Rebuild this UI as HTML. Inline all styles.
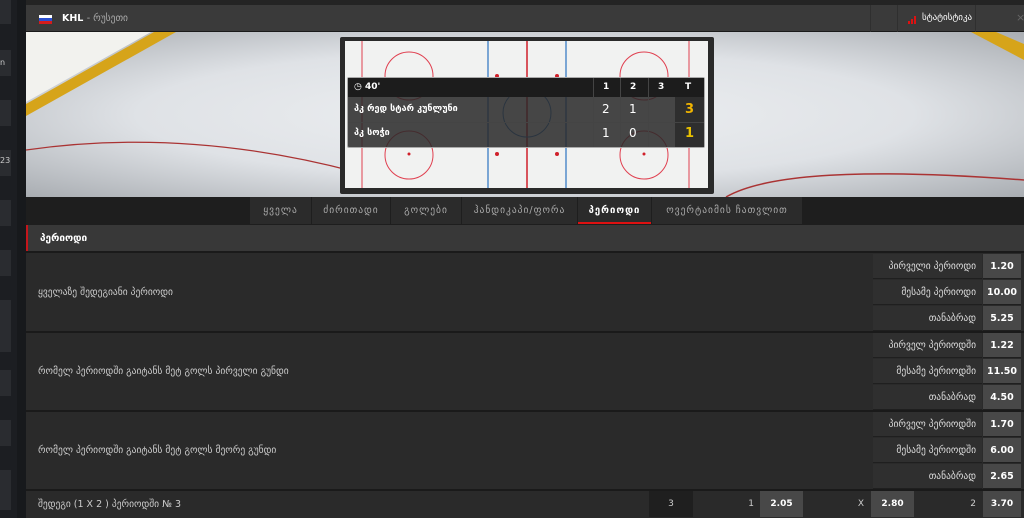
<!DOCTYPE html>
<html><head><meta charset="utf-8">
<style>
*{margin:0;padding:0;box-sizing:border-box}
body{width:1024px;height:518px;overflow:hidden;background:#17191c;font-family:"DejaVu Sans","Liberation Sans",sans-serif;font-size:9px;color:#ccc;position:relative}
.abs{position:absolute}
.side{left:0;top:0;width:17px;height:518px;background:#1c1e22}
.tile{position:absolute;left:0;width:11px;background:#2a2c30}
.main{left:26px;top:0;width:998px;height:518px;background:#242424}
.hdr{left:26px;top:5px;width:998px;height:27px;background:#3a3a3a;border-bottom:1px solid #1a1a1a}
.video{left:26px;top:32px;width:998px;height:165px;background:radial-gradient(ellipse at 50% 50%,#eef0f2 0%,#dfe2e6 55%,#a9adb2 100%)}
.tabs{left:26px;top:197px;width:998px;height:28px;background:#1e1e1e}
.tab{position:absolute;top:0;height:27px;background:#2b2b2b;color:#aaa;font-size:9.5px;letter-spacing:1px;line-height:27px;text-align:center}
.sec{left:26px;top:225px;width:998px;height:27px;background:#383838;border-left:2px solid #c4161c;color:#fff;font-weight:bold;font-size:10px;line-height:27px;padding-left:12px}
.row{position:absolute;left:26px;width:998px;background:#2a2a2a;border-top:2px solid #1a1a1a}
.rl{position:absolute;left:12px;color:#ccc;font-size:9.5px}
.lab{position:absolute;left:847px;width:109px;height:25px;background:#2f2f2f;color:#ddd;text-align:right;padding-right:6px;line-height:25px;font-size:9.5px;border-bottom:1px solid #1f1f1f}
.odd{position:absolute;left:957px;width:38px;height:25px;background:#484848;color:#fff;font-weight:bold;text-align:center;line-height:25px;font-size:9.5px;border-bottom:1px solid #1f1f1f}
.sb{left:347px;top:77px;width:358px;height:71px;border:1px solid #aaa;border-radius:2px;background:rgba(40,40,40,.85);color:#fff;font-size:9px}
.sb div{position:absolute}
</style></head><body>
<div class="abs side">
<div class="tile" style="top:0;height:24px"></div>
<div class="tile" style="top:50px;height:26px"></div>
<div class="tile" style="top:100px;height:26px"></div>
<div class="tile" style="top:150px;height:26px"></div>
<div class="tile" style="top:200px;height:26px"></div>
<div class="tile" style="top:250px;height:26px"></div>
<div class="tile" style="top:300px;height:52px"></div>
<div class="tile" style="top:370px;height:26px"></div>
<div class="tile" style="top:420px;height:26px"></div>
<div class="tile" style="top:470px;height:40px"></div>
<span class="abs" style="left:0;top:58px;font-size:8px;color:#ccc">n</span>
<span class="abs" style="left:0;top:156px;font-size:8px;color:#ccc">23</span>
</div>
<div class="abs main"></div>
<div class="abs hdr">
<div class="abs" style="left:13px;top:10px;width:13px;height:3px;background:#fff"></div>
<div class="abs" style="left:13px;top:13px;width:13px;height:3px;background:#2a4fd0"></div>
<div class="abs" style="left:13px;top:16px;width:13px;height:3px;background:#d41c1c"></div>
<span class="abs" style="left:36px;top:8px;font-size:9.5px;color:#fff;font-weight:bold">KHL <span style="font-weight:normal;color:#aaa">- რუსეთი</span></span>
<div class="abs" style="left:844px;top:0;width:1px;height:27px;background:#2f2f2f"></div>
<div class="abs" style="left:871px;top:0;width:1px;height:27px;background:#2f2f2f"></div>
<div class="abs" style="left:949px;top:0;width:1px;height:27px;background:#2f2f2f"></div>
<svg class="abs" style="left:882px;top:10px" width="9" height="9"><rect x="0" y="6" width="2" height="3" fill="#d11"/><rect x="3" y="4" width="2" height="5" fill="#d11"/><rect x="6" y="1" width="2" height="8" fill="#d11"/></svg>
<span class="abs" style="left:896px;top:8px;color:#fff;font-size:9px">სტატისტიკა</span>
<span class="abs" style="left:990px;top:6px;color:#666;font-size:11px">×</span>
</div>
<div class="abs video">
<svg width="998" height="165" style="position:absolute;left:0;top:0">
<polygon points="0,0 0,70 125,0" fill="#f2f2ee"/>
<polygon points="0,72 0,84 150,0 128,0" fill="#d6a41a"/>
<path d="M0,118 Q160,95 330,140" stroke="#a33" stroke-width="1.2" fill="none"/>
<path d="M700,165 Q760,130 998,148" stroke="#a33" stroke-width="1.5" fill="none"/>
<polygon points="945,0 998,28 998,12 970,0" fill="#d6a41a"/>
</svg>
</div>
<div class="abs" style="left:340px;top:37px;width:374px;height:157px;background:#2a2a2a;border-radius:2px"></div>
<div class="abs" style="left:345px;top:41px;width:363px;height:147px;background:#f1f2f1;overflow:hidden">
<svg width="363" height="147">
<g stroke="#e04050" fill="none" stroke-width="1">
<line x1="17" y1="0" x2="17" y2="147"/><line x1="344" y1="0" x2="344" y2="147"/>
<circle cx="64" cy="35" r="24"/><circle cx="64" cy="114" r="24"/>
<circle cx="299" cy="35" r="24"/><circle cx="299" cy="114" r="24"/>
</g>
<line x1="143" y1="0" x2="143" y2="147" stroke="#3b7cc4" stroke-width="1.3"/>
<line x1="221" y1="0" x2="221" y2="147" stroke="#3b7cc4" stroke-width="1.3"/>
<line x1="182" y1="0" x2="182" y2="147" stroke="#d0202a" stroke-width="1.5"/>
<circle cx="182" cy="72" r="24" stroke="#3b7cc4" fill="none"/>
<g fill="#d0202a"><circle cx="152" cy="35" r="2"/><circle cx="212" cy="35" r="2"/><circle cx="152" cy="113" r="2"/><circle cx="212" cy="113" r="2"/><circle cx="64" cy="113" r="1.5"/><circle cx="299" cy="113" r="1.5"/></g>
</svg>
</div>
<div class="abs sb">
<div style="left:0;top:0;width:356px;height:19px;background:#1c1c1c"></div>
<div style="left:245px;top:0;width:1px;height:69px;background:#444"></div>
<div style="left:272px;top:0;width:1px;height:69px;background:#444"></div>
<div style="left:300px;top:0;width:1px;height:69px;background:#444"></div>
<div style="left:327px;top:19px;width:29px;height:50px;background:#2e2e2e"></div>
<div style="left:0;top:44px;width:356px;height:1px;background:#444"></div>
<div style="left:6px;top:4px;font-weight:bold">◷ 40'</div>
<div style="left:255px;top:4px;font-weight:bold">1</div>
<div style="left:282px;top:4px;font-weight:bold">2</div>
<div style="left:310px;top:4px;font-weight:bold">3</div>
<div style="left:337px;top:4px;font-weight:bold">T</div>
<div style="left:6px;top:26px;font-weight:bold">პკ რედ სტარ კუნლუნი</div>
<div style="left:6px;top:50px;font-weight:bold">პკ სოჭი</div>
<div style="left:254px;top:24px;font-size:12px">2</div><div style="left:281px;top:24px;font-size:12px">1</div>
<div style="left:337px;top:24px;font-size:13px;color:#f0b400;font-weight:bold">3</div>
<div style="left:254px;top:48px;font-size:12px">1</div><div style="left:281px;top:48px;font-size:12px">0</div>
<div style="left:337px;top:48px;font-size:13px;color:#e8c000;font-weight:bold">1</div>
</div>
<div class="abs tabs">
<div class="tab" style="left:224px;width:61px">ყველა</div>
<div class="tab" style="left:286px;width:78px">ძირითადი</div>
<div class="tab" style="left:365px;width:70px">გოლები</div>
<div class="tab" style="left:436px;width:115px">ჰანდიკაპი/ფორა</div>
<div class="tab" style="left:552px;width:73px;color:#fff;font-weight:bold;border-bottom:2px solid #d11">პერიოდი</div>
<div class="tab" style="left:626px;width:150px">ოვერტაიმის ჩათვლით</div>
</div>
<div class="abs sec">პერიოდი</div>

<div class="row" style="top:251px;height:80px">
<div class="rl" style="top:34px">ყველაზე შედეგიანი პერიოდი</div>
<div class="lab" style="top:1px">პირველი პერიოდი</div><div class="odd" style="top:1px">1.20</div>
<div class="lab" style="top:27px">მესამე პერიოდი</div><div class="odd" style="top:27px">10.00</div>
<div class="lab" style="top:53px">თანაბრად</div><div class="odd" style="top:53px">5.25</div>
</div>
<div class="row" style="top:331px;height:80px">
<div class="rl" style="top:33px">რომელ პერიოდში გაიტანს მეტ გოლს პირველი გუნდი</div>
<div class="lab" style="top:0">პირველ პერიოდში</div><div class="odd" style="top:0">1.22</div>
<div class="lab" style="top:26px">მესამე პერიოდში</div><div class="odd" style="top:26px">11.50</div>
<div class="lab" style="top:52px">თანაბრად</div><div class="odd" style="top:52px">4.50</div>
</div>
<div class="row" style="top:410px;height:80px">
<div class="rl" style="top:33px">რომელ პერიოდში გაიტანს მეტ გოლს მეორე გუნდი</div>
<div class="lab" style="top:0">პირველ პერიოდში</div><div class="odd" style="top:0">1.70</div>
<div class="lab" style="top:26px">მესამე პერიოდში</div><div class="odd" style="top:26px">6.00</div>
<div class="lab" style="top:52px">თანაბრად</div><div class="odd" style="top:52px">2.65</div>
</div>
<div class="row" style="top:489px;height:29px">
<div class="rl" style="top:8px">შედეგი (1 X 2 ) პერიოდში № 3</div>
<div class="abs" style="left:623px;top:0;width:44px;height:26px;background:#1f1f1f;color:#ccc;text-align:center;line-height:26px">3</div>
<div class="abs" style="left:668px;top:0;width:65px;height:26px;background:#2a2a2a;color:#ccc;text-align:right;padding-right:5px;line-height:26px">1</div>
<div class="abs" style="left:734px;top:0;width:43px;height:26px;background:#484848;color:#fff;font-weight:bold;text-align:center;line-height:26px">2.05</div>
<div class="abs" style="left:778px;top:0;width:66px;height:26px;color:#ccc;text-align:right;padding-right:6px;line-height:26px">X</div>
<div class="abs" style="left:845px;top:0;width:43px;height:26px;background:#484848;color:#fff;font-weight:bold;text-align:center;line-height:26px">2.80</div>
<div class="abs" style="left:889px;top:0;width:67px;height:26px;color:#ccc;text-align:right;padding-right:6px;line-height:26px">2</div>
<div class="abs" style="left:957px;top:0;width:38px;height:26px;background:#484848;color:#fff;font-weight:bold;text-align:center;line-height:26px">3.70</div>
</div>
</body></html>
